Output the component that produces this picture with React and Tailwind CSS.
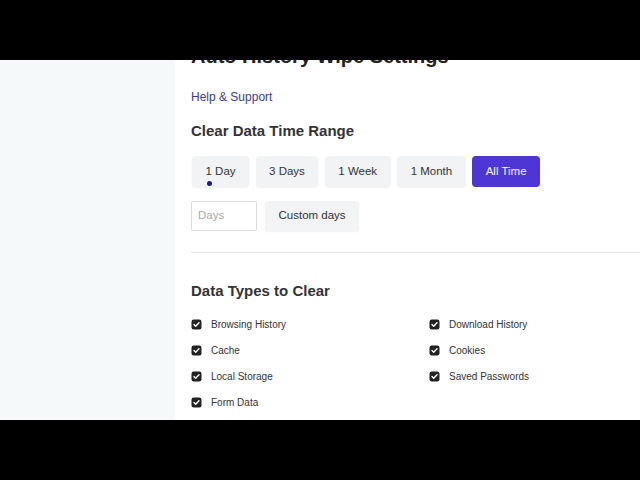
import React from "react";

const Check = () => (
  <svg width="11" height="11" viewBox="0 0 11 11" className="shrink-0">
    <rect x="0.5" y="0.5" width="10" height="10" rx="2.2" fill="#222" />
    <path d="M3 5.6 L4.7 7.2 L8 3.8" stroke="#fff" strokeWidth="1.4" fill="none" strokeLinecap="round" strokeLinejoin="round" />
  </svg>
);

const Item = ({ label }) => (
  <div className="flex items-center h-[26px] gap-[9px]">
    <Check />
    <span className="text-[10px] text-[#333]">{label}</span>
  </div>
);

export default function App() {
  const btn = "h-[31px] px-[13.5px] rounded-[4px] bg-[#f2f3f4] shadow-[0_1px_2px_rgba(0,0,0,0.06)] text-[11.5px] text-[#333] flex items-center";
  return (
    <div className="w-[640px] h-[480px] bg-black flex flex-col" style={{ fontFamily: '"Liberation Sans", Arial, sans-serif' }}>
      <div className="h-[60px] bg-black shrink-0" />
      <div className="h-[360px] flex overflow-hidden bg-white shrink-0">
        <aside className="w-[175px] bg-[#f6f9f9] shrink-0" />
        <main className="flex-1 pl-[16px] flex flex-col">
          <h1 className="mt-[-16px] text-[20px] leading-[24px] font-bold text-[#222] whitespace-nowrap">Auto History Wipe Settings</h1>
          <a className="mt-[21px] text-[12px] leading-[16px] text-[#3e3b88]">Help &amp; Support</a>
          <h2 className="mt-[16px] text-[15px] leading-[20px] font-bold text-[#333]">Clear Data Time Range</h2>
          <div className="mt-[15px] ml-[1px] flex gap-[6.5px]">
            <div className={btn + " relative"}>
              1 Day
              <span className="absolute left-[15px] top-[25px] w-[5px] h-[5px] rounded-full bg-[#1a1a8a]" />
            </div>
            <div className={btn}>3 Days</div>
            <div className={btn}>1 Week</div>
            <div className={btn}>1 Month</div>
            <div className="h-[31px] px-[13.5px] rounded-[4px] bg-[#4d35d6] text-[11.5px] text-white flex items-center">All Time</div>
          </div>
          <div className="mt-[14px] flex gap-[8px]">
            <div className="w-[66px] h-[30px] border border-[#dcdcdc] rounded-[2px] flex items-center pl-[6px] text-[11.5px] text-[#aaa]">Days</div>
            <div className="h-[30px] px-[13.5px] rounded-[4px] bg-[#f2f3f4] shadow-[0_1px_2px_rgba(0,0,0,0.06)] text-[11.5px] text-[#333] flex items-center">Custom days</div>
          </div>
          <div className="mt-[21px] border-t border-[#e4e4e4]" />
          <h2 className="mt-[28px] text-[15px] leading-[20px] font-bold text-[#333]">Data Types to Clear</h2>
          <div className="mt-[10px] grid grid-cols-[238px_1fr]">
            <Item label="Browsing History" />
            <Item label="Download History" />
            <Item label="Cache" />
            <Item label="Cookies" />
            <Item label="Local Storage" />
            <Item label="Saved Passwords" />
            <Item label="Form Data" />
          </div>
        </main>
      </div>
      <div className="h-[60px] bg-black shrink-0" />
    </div>
  );
}
